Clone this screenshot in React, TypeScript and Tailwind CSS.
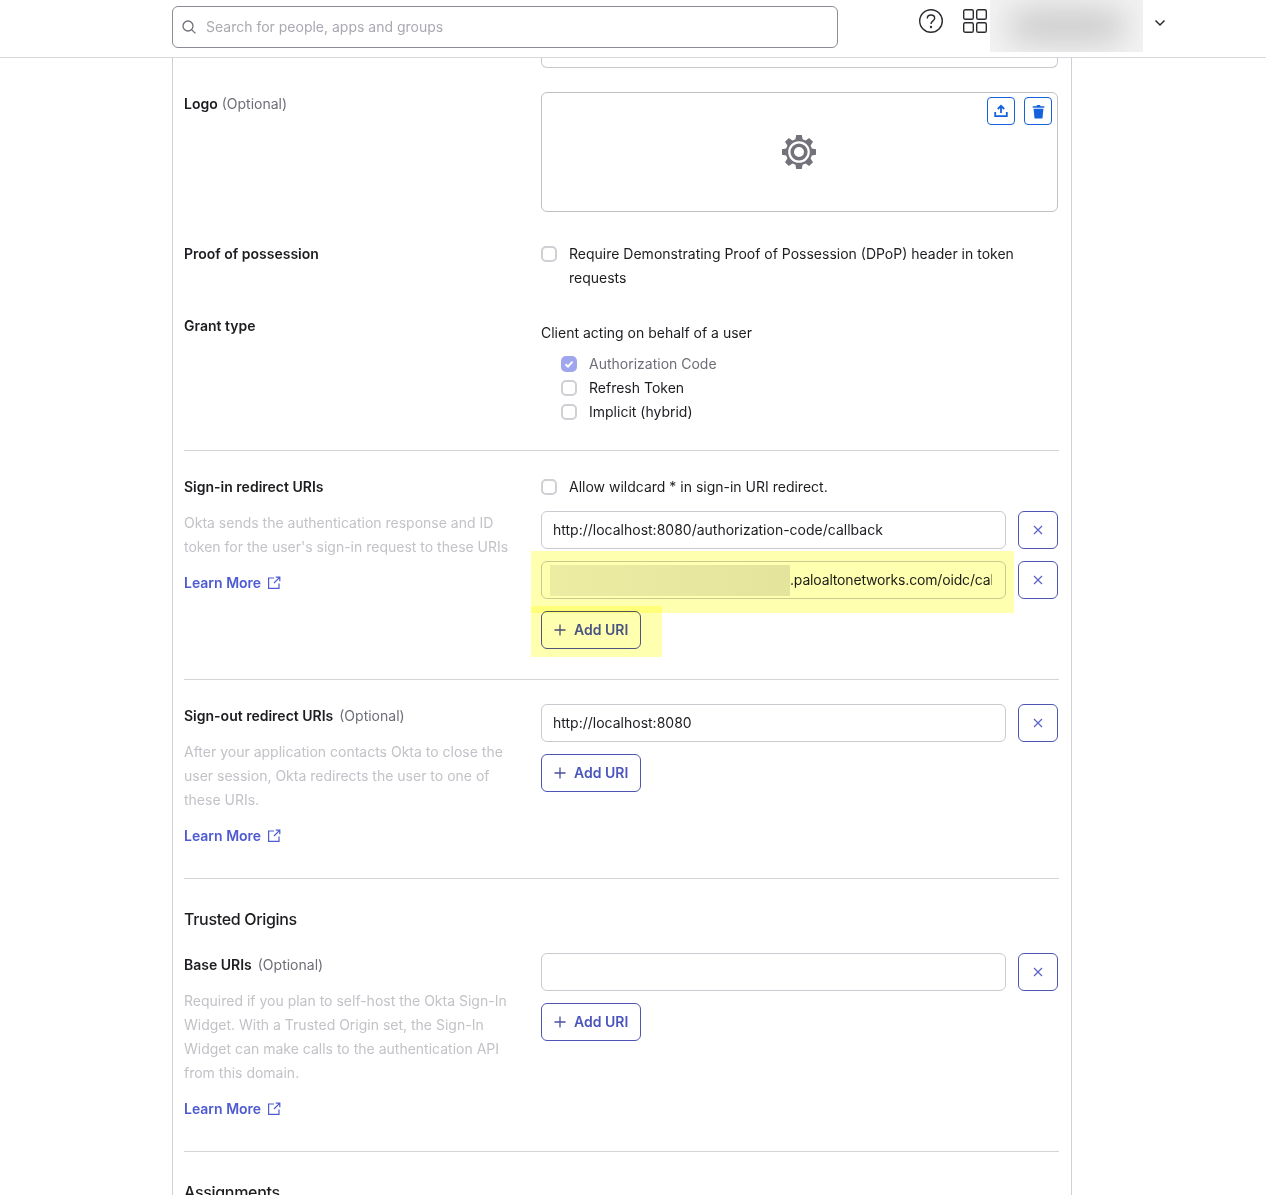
import React from "react";

const font = { fontFamily: "Inter, 'Liberation Sans', sans-serif" };

function ExtLink() {
  return (
    <svg width="14" height="14" viewBox="0 0 14 14" fill="none" stroke="#4d5ad1" strokeWidth="1.2">
      <path d="M7 2H1.6V12.4H12V7.4" />
      <path d="M8.8 1.2H12.8V5.2M12.6 1.4L7 7" />
    </svg>
  );
}

function LearnMore() {
  return (
    <div className="mt-3 flex h-6 items-center gap-[6px] font-semibold text-[#4d5ad1]">
      Learn More <ExtLink />
    </div>
  );
}

function Box({ checked }: { checked?: boolean }) {
  if (checked) {
    return (
      <span className="flex h-4 w-4 shrink-0 items-center justify-center rounded-[5px] bg-[#a0a6ee]">
        <svg width="12" height="12" viewBox="0 0 12 12" fill="none" stroke="#fff" strokeWidth="2">
          <path d="M2.5 6.2L5 8.6L9.5 3.6" />
        </svg>
      </span>
    );
  }
  return <span className="block h-4 w-4 shrink-0 rounded-[5px] border-2 border-[#cfcfd4] bg-white" />;
}

function XBtn() {
  return (
    <button className="flex h-[38px] w-10 shrink-0 items-center justify-center rounded-md border border-[#4f55b5] bg-white">
      <svg width="10" height="10" viewBox="0 0 10 10" stroke="#5a62c8" strokeWidth="1.2">
        <path d="M1 1L9 9M9 1L1 9" />
      </svg>
    </button>
  );
}

function UriField({ value }: { value: string }) {
  return (
    <div className="flex gap-3">
      <div className="flex h-[38px] w-[465px] items-center rounded-md border border-[#c9c9d0] bg-white pl-[11px] pr-3 text-[#1d1d21]">
        {value}
      </div>
      <XBtn />
    </div>
  );
}

function AddUri() {
  return (
    <button className="mt-3 flex h-[38px] w-[100px] items-center gap-2 rounded-md border border-[#4f55b5] bg-white pl-3 font-semibold text-[#4a55bd]">
      <svg width="12" height="12" viewBox="0 0 12 12" stroke="#4a4f9e" strokeWidth="1.3">
        <path d="M6 0.5V11.5M0.5 6H11.5" />
      </svg>
      Add URI
    </button>
  );
}

function Divider() {
  return <div className="h-px w-[875px] bg-[#d3d3d8]" />;
}

function Row({ left, right, className }: { left: React.ReactNode; right: React.ReactNode; className: string }) {
  return (
    <div className={`grid grid-cols-[357px_517px] ${className}`}>
      <div>{left}</div>
      <div>{right}</div>
    </div>
  );
}

function Label({ title, optional }: { title: string; optional?: boolean }) {
  return (
    <div className="flex h-6 items-center gap-[6px]">
      <span className="font-semibold text-[#1d1d21]">{title}</span>
      {optional && <span className="text-[#6e6e78]">(Optional)</span>}
    </div>
  );
}

function Desc({ lines }: { lines: string[] }) {
  return (
    <div className="mt-3 text-[#c2c2c8]">
      {lines.map((l) => (
        <div key={l} className="h-6 whitespace-nowrap">
          {l}
        </div>
      ))}
    </div>
  );
}

export default function App() {
  return (
    <div className="h-[1195px] w-[1266px] overflow-hidden bg-white text-[14px] leading-6" style={font}>
      <header className="flex h-[58px] border-b border-[#d7d7dc] pl-[172px]">
        <div className="mt-[6px] flex h-[42px] w-[666px] items-center gap-[10px] rounded-md border border-[#8c8c94] pl-[9px] text-[#a9a9b1]">
          <svg width="14" height="14" viewBox="0 0 14 14" fill="none" stroke="#6e6e78" strokeWidth="1.3">
            <circle cx="6" cy="6" r="5" />
            <path d="M9.6 9.6L13.4 13.4" />
          </svg>
          Search for people, apps and groups
        </div>
        <svg className="ml-[81px] mt-[9px]" width="24" height="24" viewBox="0 0 24 24" fill="none" stroke="#2b2b30" strokeWidth="1.4">
          <circle cx="12" cy="12" r="11.3" />
          <path d="M8.3 9.4C8.3 7.2 10 6 12 6C14 6 15.7 7.2 15.7 9.2C15.7 11.8 12 12 12 15" />
          <circle cx="12" cy="18" r="0.5" fill="#2b2b30" />
        </svg>
        <svg className="ml-5 mt-[9px]" width="24" height="24" viewBox="0 0 24 24" fill="none" stroke="#2b2b30" strokeWidth="1.4">
          <rect x="0.7" y="0.7" width="9.6" height="9.6" rx="1.6" />
          <rect x="13.7" y="0.7" width="9.6" height="9.6" rx="1.6" />
          <rect x="0.7" y="13.7" width="9.6" height="9.6" rx="1.6" />
          <rect x="13.7" y="13.7" width="9.6" height="9.6" rx="1.6" />
        </svg>
        <div className="ml-[3px] h-[52px] w-[153px] overflow-hidden bg-[#f3f3f3]">
          <div className="ml-[18px] mt-[10px] h-8 w-[118px] rounded-full bg-[#c8c8c8] blur-lg" />
        </div>
        <svg className="ml-[11px] mt-[19px]" width="12" height="8" viewBox="0 0 12 8" fill="none" stroke="#2b2b30" strokeWidth="1.5">
          <path d="M1.5 1.5L6 6L10.5 1.5" />
        </svg>
      </header>

      <main className="ml-[172px] h-[1137px] w-[900px] border-x border-[#cfcfd4] pl-[11px]">
        <div className="ml-[357px] h-[10px] w-[517px] rounded-b-md border-x border-b border-[#c9c9d0]" />

        <Row
          className="mt-6"
          left={
            <div className="flex h-6 items-center gap-1">
              <span className="font-semibold text-[#1d1d21]">Logo</span>
              <span className="text-[#6e6e78]">(Optional)</span>
            </div>
          }
          right={
            <div className="relative flex h-[120px] items-center justify-center rounded-md border border-[#c0c0c6]">
              <svg className="-ml-[2px] -mt-px" width="36" height="36" viewBox="0 0 36 36" fill="#72727a">
                <path
                  fillRule="evenodd"
                  d="M15.2 1H20.8L21.6 5.2L24.6 6.4L28.2 4L32 7.8L29.6 11.4L30.8 14.4L35 15.2V20.8L30.8 21.6L29.6 24.6L32 28.2L28.2 32L24.6 29.6L21.6 30.8L20.8 35H15.2L14.4 30.8L11.4 29.6L7.8 32L4 28.2L6.4 24.6L5.2 21.6L1 20.8V15.2L5.2 14.4L6.4 11.4L4 7.8L7.8 4L11.4 6.4L14.4 5.2ZM18 7.2A10.8 10.8 0 1 0 18 28.8A10.8 10.8 0 1 0 18 7.2Z"
                />
                <path
                  fillRule="evenodd"
                  d="M18 9.4A8.6 8.6 0 1 0 18 26.6A8.6 8.6 0 1 0 18 9.4ZM18 13A5 5 0 1 1 18 23A5 5 0 1 1 18 13Z"
                />
              </svg>
              <div className="absolute right-[5px] top-[4px] flex gap-[9px]">
                <button className="flex h-7 w-7 items-center justify-center rounded border border-[#1662dd] bg-white">
                  <svg width="14" height="14" viewBox="0 0 14 14" fill="none" stroke="#1662dd" strokeWidth="1.8">
                    <path d="M7 9V2M3.8 5L7 1.8L10.2 5" />
                    <path d="M1.2 8V12.2H12.8V8" />
                  </svg>
                </button>
                <button className="flex h-7 w-7 items-center justify-center rounded border border-[#1662dd] bg-white">
                  <svg width="13" height="15" viewBox="0 0 12 14" fill="#1662dd">
                    <path d="M0.6 2.2H4L4.6 1H7.4L8 2.2H11.4V3.4H0.6Z" />
                    <path d="M1.4 4.4H10.6L9.7 13.6H2.3Z" />
                  </svg>
                </button>
              </div>
            </div>
          }
        />

        <Row
          className="mt-[30px]"
          left={<Label title="Proof of possession" />}
          right={
            <div className="flex gap-3 text-[#1d1d21]">
              <span className="mt-1 block shrink-0">
                <Box />
              </span>
              <span>
                Require Demonstrating Proof of Possession (DPoP) header in token
                <br />
                requests
              </span>
            </div>
          }
        />

        <Row
          className="mt-6"
          left={<Label title="Grant type" />}
          right={
            <div className="pt-[7px]">
              <div className="h-6 text-[#1d1d21]">Client acting on behalf of a user</div>
              <div className="ml-5 mt-[7px]">
                <div className="flex h-6 items-center gap-3 text-[#6e6e78]">
                  <Box checked /> Authorization Code
                </div>
                <div className="flex h-6 items-center gap-3 text-[#1d1d21]">
                  <Box /> Refresh Token
                </div>
                <div className="flex h-6 items-center gap-3 text-[#1d1d21]">
                  <Box /> Implicit (hybrid)
                </div>
              </div>
            </div>
          }
        />

        <div className="mt-[26px]">
          <Divider />
        </div>

        <Row
          className="mt-6"
          left={
            <>
              <Label title="Sign-in redirect URIs" />
              <Desc lines={["Okta sends the authentication response and ID", "token for the user's sign-in request to these URIs"]} />
              <LearnMore />
            </>
          }
          right={
            <>
              <div className="flex h-6 items-center gap-3 text-[#1d1d21]">
                <Box /> Allow wildcard * in sign-in URI redirect.
              </div>
              <div className="mt-3">
                <UriField value="http://localhost:8080/authorization-code/callback" />
              </div>
              <div className="relative mt-3">
                <div className="flex gap-3">
                  <div className="relative flex h-[38px] w-[465px] items-center rounded-md border border-[#c9c9d0] bg-white pl-[248px] pr-[13px] text-[#1d1d21]">
                    <span className="block overflow-hidden whitespace-nowrap tracking-[-0.012em]">.paloaltonetworks.com/oidc/callback</span>
                    <div className="absolute bottom-[2px] left-2 top-[3px] w-[240px] bg-gradient-to-r from-[#ececec] via-[#e8e8e8] to-[#e4e4e4]" />
                  </div>
                  <XBtn />
                </div>
                <div className="pointer-events-none absolute -left-[10px] -top-[10px] h-[62px] w-[483px] bg-[#ffffb0] mix-blend-multiply" />
                <div className="pointer-events-none absolute -left-[10px] top-[45px] h-[51px] w-[131px] bg-[#ffffb0] mix-blend-multiply" />
              </div>
              <AddUri />
            </>
          }
        />

        <div className="mt-[30px]">
          <Divider />
        </div>

        <Row
          className="mt-6"
          left={
            <>
              <Label title="Sign-out redirect URIs" optional />
              <Desc
                lines={[
                  "After your application contacts Okta to close the",
                  "user session, Okta redirects the user to one of",
                  "these URIs.",
                ]}
              />
              <LearnMore />
            </>
          }
          right={
            <>
              <UriField value="http://localhost:8080" />
              <AddUri />
            </>
          }
        />

        <div className="mt-[30px]">
          <Divider />
        </div>

        <h2 className="mt-7 h-6 text-base font-medium tracking-[-0.02em] text-[#1d1d21]">Trusted Origins</h2>

        <Row
          className="mt-[22px]"
          left={
            <>
              <Label title="Base URIs" optional />
              <Desc
                lines={[
                  "Required if you plan to self-host the Okta Sign-In",
                  "Widget. With a Trusted Origin set, the Sign-In",
                  "Widget can make calls to the authentication API",
                  "from this domain.",
                ]}
              />
              <LearnMore />
            </>
          }
          right={
            <>
              <UriField value="" />
              <AddUri />
            </>
          }
        />

        <div className="mt-[30px]">
          <Divider />
        </div>

        <h2 className="mt-7 h-6 text-base font-medium tracking-[-0.02em] text-[#1d1d21]">Assignments</h2>
      </main>
    </div>
  );
}
